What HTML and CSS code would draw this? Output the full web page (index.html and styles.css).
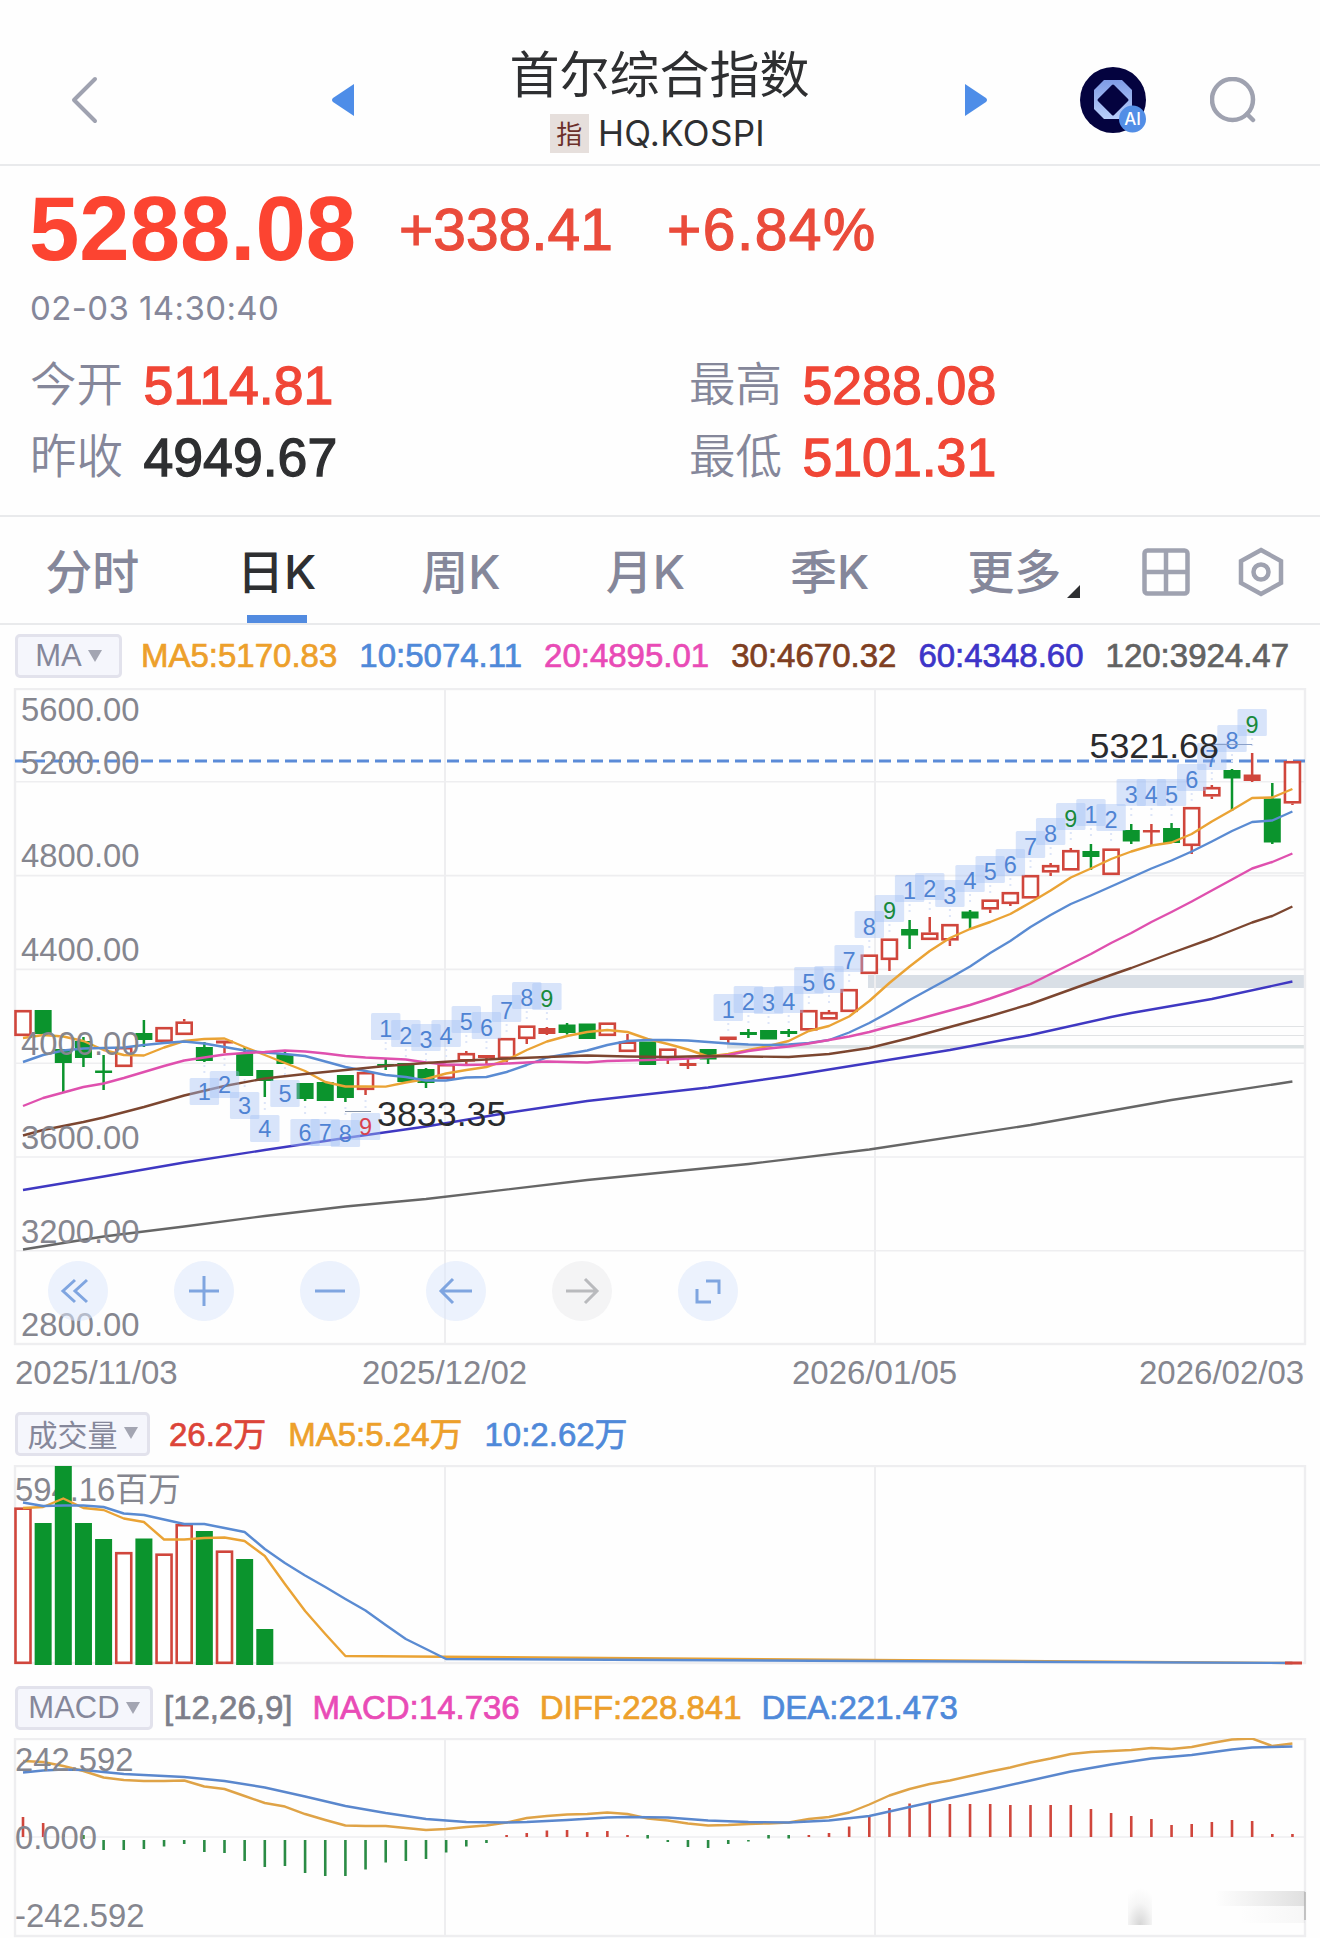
FILE: index.html
```html
<!DOCTYPE html>
<html lang="zh-CN">
<head>
    <meta charset="UTF-8">
    <meta name="viewport" content="width=device-width, initial-scale=1.0">
    <title>首尔综合指数</title>
    <link rel="stylesheet" href="styles.css">
</head>
<body>
    <div class="page">
        <header class="header">
            <svg class="back" width="30" height="48" viewBox="0 0 30 48"><path d="M25 3L4 24L25 45"/></svg>
            <svg class="prev" width="22" height="32" viewBox="0 0 22 32"><path d="M22 0V32L1 18Q-1 16 1 14Z"/></svg>
            <div class="title">
                <h1>首尔综合指数</h1>
                <div class="code"><span class="tag">指</span>HQ.KOSPI</div>
            </div>
            <svg class="next" width="22" height="32" viewBox="0 0 22 32"><path d="M0 0V32L21 18Q23 16 21 14Z"/></svg>
            <svg class="ai" width="68" height="68" viewBox="0 0 68 68">
                <defs>
                    <linearGradient id="aiRing" x1="0" y1="0" x2="0" y2="1">
                        <stop offset="0" stop-color="#7f9be6"/>
                        <stop offset="1" stop-color="#b9cffa"/>
                    </linearGradient>
                </defs>
                <circle cx="33" cy="34" r="33" fill="#04033f"/>
                <path d="M24 14H42L52 24V43L42 53H24L14 43V24Z" fill="url(#aiRing)"/>
                <path d="M33 20L47 34L33 48L19 34Z" fill="#04033f" stroke="#04033f" stroke-width="3" stroke-linejoin="round"/>
                <circle cx="52.500" cy="53" r="13.500" fill="#528ee6"/>
                <text x="52.500" y="59" class="ai-text">AI</text>
            </svg>
            <svg class="search" width="46" height="46" viewBox="0 0 46 46"><circle cx="22.500" cy="22.500" r="20.500"/><path d="M37 37L43 43"/></svg>
        </header>

        <section class="quote">
            <div class="price-row">
                <span class="price">5288.08</span>
                <span class="change">+338.41</span>
                <span class="change percent">+6.84%</span>
            </div>
            <div class="time">02-03 14:30:40</div>
            <div class="stats">
                <div class="stat"><label>今开</label><b class="up">5114.81</b></div>
                <div class="stat"><label>最高</label><b class="up">5288.08</b></div>
                <div class="stat"><label>昨收</label><b>4949.67</b></div>
                <div class="stat"><label>最低</label><b class="up">5101.31</b></div>
            </div>
        </section>

        <nav class="tabs">
            <div class="tab">分时</div>
            <div class="tab active">日K</div>
            <div class="tab">周K</div>
            <div class="tab">月K</div>
            <div class="tab">季K</div>
            <div class="tab more">更多</div>
            <svg class="grid-icon" width="48" height="48" viewBox="0 0 48 48"><rect x="2.500" y="2.500" width="43" height="43" rx="3"/><path d="M24 2V46M2 24H46"/></svg>
            <svg class="gear-icon" width="46" height="50" viewBox="0 0 46 50"><path d="M23 3L43 14V36L23 47L3 36V14Z"/><circle cx="23" cy="25" r="7.500"/></svg>
        </nav>

        <div class="legend legend-ma">
            <span class="select">MA<i></i></span>
            <span class="orange">MA5:5170.83</span>
            <span class="blue">10:5074.11</span>
            <span class="pink">20:4895.01</span>
            <span class="brown">30:4670.32</span>
            <span class="navy">60:4348.60</span>
            <span class="dark">120:3924.47</span>
        </div>
        <div class="chart">
            <svg id="kline" width="1320" height="658" viewBox="0 688 1320 658"></svg>
            <div class="tools">
                <span class="tool"><svg viewBox="0 0 60 60"><path d="M27 19L15 30L27 41M39 19L27 30L39 41"/></svg></span>
                <span class="tool"><svg viewBox="0 0 60 60"><path d="M15 30H45M30 15V45"/></svg></span>
                <span class="tool"><svg viewBox="0 0 60 60"><path d="M15 30H45"/></svg></span>
                <span class="tool"><svg viewBox="0 0 60 60"><path d="M46 30H15M27 18L15 30L27 42"/></svg></span>
                <span class="tool off"><svg viewBox="0 0 60 60"><path d="M14 30H45M33 18L45 30L33 42"/></svg></span>
                <span class="tool"><svg viewBox="0 0 60 60"><path d="M28 20H41V33M19 28V41H33"/></svg></span>
            </div>
        </div>
        <div class="dates">
            <span>2025/11/03</span>
            <span>2025/12/02</span>
            <span>2026/01/05</span>
            <span>2026/02/03</span>
        </div>

        <div class="legend legend-vol">
            <span class="select">成交量<i></i></span>
            <span class="red">26.2万</span>
            <span class="orange">MA5:5.24万</span>
            <span class="blue">10:2.62万</span>
        </div>
        <svg id="volume" class="panel" width="1320" height="200" viewBox="0 1465 1320 200"></svg>

        <div class="legend legend-macd">
            <span class="select">MACD<i></i></span>
            <span class="gray">[12,26,9]</span>
            <span class="pink">MACD:14.736</span>
            <span class="orange">DIFF:228.841</span>
            <span class="blue">DEA:221.473</span>
        </div>
        <svg id="macd" class="panel" width="1320" height="200" viewBox="0 1738 1320 200"></svg>
    </div>
    <script src="chart.js"></script>
</body>
</html>
```

FILE: styles.css
```css
* {
    box-sizing: border-box;
}
body {
    margin: 0;
    background: #fefefe;
    color: #2e2f31;
    font-family: "Liberation Sans", "Noto Sans CJK SC", sans-serif;
}
.page {
    width: 1320px;
    height: 1938px;
    overflow: hidden;
}
svg {
    display: block;
    flex: none;
}

/* header */
.header {
    display: flex;
    align-items: center;
    height: 166px;
    padding: 36px 0 0 70px;
    border-bottom: 2px solid #e9eaec;
}
.back, .search {
    fill: none;
    stroke: #9fa2b0;
    stroke-width: 4;
    stroke-linecap: round;
    stroke-linejoin: round;
}
.search {
    stroke-width: 4.5;
    margin-left: 62px;
}
.prev, .next {
    fill: #4e8de8;
}
.prev {
    margin-left: 232px;
}
.title {
    width: 611px;
    padding-top: 2px;
    text-align: center;
}
.title h1 {
    margin: 0;
    font-size: 50px;
    font-weight: 400;
    line-height: 64px;
}
.code {
    display: flex;
    justify-content: center;
    align-items: center;
    height: 50px;
    padding-right: 4px;
    font: 35px/50px Inter, sans-serif;
    letter-spacing: 0.3px;
}
.tag {
    width: 39px;
    height: 39px;
    margin-right: 9px;
    background: #e6dfdc;
    color: #6b2f2a;
    font: 26px/37px "Noto Sans CJK SC", sans-serif;
}
.ai {
    margin-left: 93px;
}
.ai-text {
    fill: #fff;
    font: 500 17px Inter, sans-serif;
    text-anchor: middle;
}

/* quote */
.quote {
    height: 351px;
    padding: 13px 30px 0;
    border-bottom: 2px solid #e9eaec;
}
.price-row {
    display: flex;
    align-items: center;
    height: 100px;
    color: #fc4431;
}
.price {
    width: 370px;
    font-size: 90.5px;
    font-weight: 700;
    margin-left: -1px;
}
.change {
    width: 268px;
    font-size: 58.7px;
    color: #ea4b3b;
    -webkit-text-stroke: 1.2px #ea4b3b;
}
.percent {
    letter-spacing: 1.5px;
}
.time {
    font: 33px/58px Inter, sans-serif;
    letter-spacing: 0.4px;
    color: #85879a;
}
.stats {
    display: grid;
    grid-template-columns: 659px 1fr;
    grid-auto-rows: 72px;
    margin-top: 12px;
}
.stat {
    display: flex;
    align-items: center;
    font-size: 46.5px;
    line-height: 72px;
}
.stat label {
    width: 113.5px;
    height: 72px;
    margin-top: -8px;
    color: #85879a;
    font-family: "Noto Sans CJK SC", sans-serif;
    font-weight: 350;
}
.stat b {
    font-size: 53.6px;
    font-weight: 400;
    -webkit-text-stroke: 1.3px;
}
.up {
    color: #f04636;
}

/* tabs */
.tabs {
    display: flex;
    align-items: center;
    height: 108px;
    border-bottom: 2px solid #e9eaec;
}
.tab {
    position: relative;
    width: 184.4px;
    height: 106px;
    text-align: center;
    color: #85879a;
    font: 500 47px/110px Inter, "Noto Sans CJK SC", sans-serif;
}
.tab.active {
    color: #2e2f31;
}
.tab.active::after {
    content: "";
    position: absolute;
    left: 63px;
    bottom: 0;
    width: 60px;
    height: 8px;
    background: #528be0;
}
.tab.more::after {
    content: "";
    position: absolute;
    right: 26px;
    bottom: 25px;
    border-left: 13px solid transparent;
    border-bottom: 13px solid #2e2f31;
}
.grid-icon, .gear-icon {
    margin-top: 3px;
    margin-left: 36px;
    fill: none;
    stroke: #9fa2b0;
    stroke-width: 4.5;
}
.gear-icon {
    margin-left: 48px;
}

/* legends */
.legend {
    display: flex;
    align-items: center;
    gap: 22px;
    padding-left: 15px;
    font-size: 33px;
    white-space: nowrap;
    -webkit-text-stroke: 0.7px;
}
.legend-ma {
    height: 63px;
    padding-bottom: 2px;
}
.legend-vol {
    height: 61px;
    padding-bottom: 1px;
}
.legend-vol > span:not(.select) {
    margin-top: -4px;
}
.legend-macd {
    height: 73px;
    padding-top: 12px;
    gap: 20px;
}
.select {
    display: flex;
    align-items: center;
    justify-content: center;
    gap: 6px;
    width: 107px;
    height: 44px;
    margin-right: -3px;
    border: 3px solid #e2e2ec;
    border-radius: 5px;
    background: #f5f6fc;
    color: #85879a;
    font-size: 31px;
    -webkit-text-stroke: 0;
}
.legend-vol .select {
    width: 135px;
    margin-right: -3px;
    padding-bottom: 3px;
    font-size: 30px;
}
.legend-macd .select {
    width: 138px;
    margin-right: -9px;
}
.select i {
    border: 7px solid transparent;
    border-top: 12px solid #a3a5b2;
    border-bottom: 0;
}
.orange { color: #eda02b; }
.blue { color: #4f89d9; }
.pink { color: #e94bb6; }
.brown { color: #7f3f22; }
.navy { color: #3d35c8; }
.dark { color: #626262; }
.gray { color: #7d7e89; }
.red { color: #dc4438; }

/* charts */
.chart {
    position: relative;
}
.tools {
    position: absolute;
    left: 47.5px;
    top: 573px;
    display: flex;
    gap: 66px;
}
.tool {
    width: 60px;
    height: 60px;
    border-radius: 50%;
    background: rgba(221, 232, 252, 0.55);
}
.tool path {
    fill: none;
    stroke: #7fa5e0;
    stroke-width: 3;
}
.tool.off {
    background: #f4f4f5;
}
.tool.off path {
    stroke: #b9babd;
}
.dates {
    display: flex;
    height: 58px;
    padding: 0 15px;
    color: #85868f;
    font-size: 33px;
    line-height: 54px;
}
.dates span {
    width: 347px;
}
.dates span:nth-child(2) {
    width: 430px;
}
.dates span:last-child {
    width: auto;
}
.axis {
    fill: #85868f;
    font-size: 32.8px;
}
.peak {
    fill: #2a2b2d;
    font-size: 35.8px;
}
.mark {
    font-size: 23.5px;
    text-anchor: middle;
}
.line {
    fill: none;
    stroke-width: 2.4;
    stroke-linejoin: round;
}
```

FILE: chart.js
```js
const GREEN = "#0b942d";
const RED = "#d0463c";
const GRID = "#eeeef0";
const STEP = 20.15;
const X0 = 23;
const xAt = i => X0 + i * STEP;

const rect = (x, y, w, h, attrs) => `<rect x="${x}" y="${y}" width="${w}" height="${h}" ${attrs}/>`;
const seg = (x1, y1, x2, y2, color, w) => `<path d="M${x1} ${y1}L${x2} ${y2}" stroke="${color}" stroke-width="${w}"/>`;
const text = (x, y, cls, str, extra = "") => `<text x="${x}" y="${y}" class="${cls}" ${extra}>${str}</text>`;

// points are [index, y] pairs
function line(points, color) {
    const d = points.map(p => xAt(p[0]).toFixed(1) + "," + p[1]).join(" ");
    return `<polyline class="line" points="${d}" stroke="${color}"/>`;
}
const seq = (...ys) => ys.map((y, i) => [i, y]);

function frame(top, bottom) {
    return rect(15, top, 1290, bottom - top, `fill="none" stroke="${GRID}" stroke-width="2.4"`)
        + seg(445, top, 445, bottom, GRID, 2) + seg(875, top, 875, bottom, GRID, 2);
}

// [type, body top, body bottom, wick top, wick bottom], r hollow, s solid red, g green
const candles = [
    ["r", 1010, 1036], ["g", 1010, 1034], ["g", 1049, 1063, 1049, 1093], ["g", 1041, 1058, 1037, 1067],
    ["g", 1070.5, 1073, 1055, 1090], ["r", 1047, 1067], ["g", 1033, 1040, 1020, 1047], ["r", 1027, 1042],
    ["r", 1021.5, 1035, 1019, 1022], ["g", 1047, 1061, 1042, 1062], ["s", 1040.5, 1043.5, 1041, 1053], ["g", 1053, 1076, 1047, 1076],
    ["g", 1070, 1081, 1070, 1097], ["g", 1054, 1064, 1050, 1064], ["g", 1083, 1099, 1083, 1101], ["g", 1082, 1101],
    ["g", 1075, 1098, 1075, 1102], ["r", 1072, 1090, 1090, 1095], ["g", 1064, 1066, 1059, 1070], ["g", 1063, 1082],
    ["g", 1069, 1083, 1068, 1088], ["r", 1064, 1079], ["r", 1053, 1061.5, 1051, 1064], ["s", 1055, 1058, 1055, 1065],
    ["r", 1038, 1059, 1059, 1062], ["r", 1025.5, 1039, 1039, 1044], ["s", 1028, 1034, 1027, 1035], ["g", 1024.5, 1033, 1023, 1034.5],
    ["g", 1023.5, 1039], ["r", 1022.5, 1036], ["r", 1041.5, 1052, 1034, 1042], ["g", 1041.5, 1065],
    ["r", 1048.5, 1058.5, 1059, 1064], ["s", 1063, 1066, 1059, 1069], ["g", 1049, 1059.5, 1049, 1064], ["s", 1036.5, 1040, 1037, 1043],
    ["g", 1032, 1035, 1029, 1038], ["g", 1030, 1039.5], ["g", 1031, 1034, 1029, 1037], ["r", 1010, 1030.5],
    ["r", 1012, 1019.5, 1010, 1012], ["r", 989, 1012], ["r", 954.5, 974], ["r", 938.5, 960, 960, 971],
    ["g", 929, 935.5, 920, 949], ["r", 932.5, 940, 917, 932], ["r", 924, 940.5, 941, 946], ["g", 911.5, 918.5, 910, 929],
    ["r", 899.5, 909.5, 909, 913], ["r", 892, 904, 904, 906], ["r", 875, 898.500], ["r", 865, 872.5, 863, 876],
    ["r", 850, 870.5, 848, 850], ["g", 851, 857, 844, 870], ["r", 848.5, 875], ["g", 830, 841.5, 824, 844],
    ["s", 830, 832.5, 824, 845], ["g", 828, 843, 823, 843], ["r", 807, 846, 846, 854], ["r", 787, 796.5, 785, 799],
    ["g", 770, 778.5, 769, 811], ["s", 774.5, 781, 753, 782], ["g", 798.5, 842.5, 783, 844], ["r", 761, 803.5, 803, 805]
];

// [candle index, digit, box top, side]
const marks = [
    [9, 1, 1078, "b"], [10, 2, 1071, "b"], [11, 3, 1092, "b"], [12, 4, 1115, "b"], [13, 5, 1080, "b"],
    [14, 6, 1119, "b"], [15, 7, 1119, "b"], [16, 8, 1120, "b"], [17, 9, 1113, "b"],
    [18, 1, 1013], [19, 2, 1020], [20, 3, 1024], [21, 4, 1020], [22, 5, 1006], [23, 6, 1012], [24, 7, 995], [25, 8, 982], [26, 9, 983],
    [35, 1, 994], [36, 2, 986], [37, 3, 987], [38, 4, 986], [39, 5, 967], [40, 6, 966], [41, 7, 945], [42, 8, 911], [43, 9, 895],
    [44, 1, 875], [45, 2, 873], [46, 3, 880], [47, 4, 865], [48, 5, 856], [49, 6, 849], [50, 7, 831], [51, 8, 818], [52, 9, 803],
    [53, 1, 799], [54, 2, 804], [55, 3, 779], [56, 4, 779], [57, 5, 779], [58, 6, 764], [59, 7, 743], [60, 8, 725], [61, 9, 709]
];

const ma5 = seq(1038, 1035, 1036.5, 1041, 1050, 1055, 1055.5, 1047.5, 1041, 1039, 1038.5, 1047, 1055, 1063, 1071, 1082, 1086.5, 1086.5,
    1086.6, 1082.5, 1079, 1073.5, 1070, 1067, 1060, 1050, 1041.5, 1036, 1032, 1030, 1032, 1039, 1044, 1049.5, 1056.5, 1054, 1050, 1046,
    1041, 1031, 1026, 1016.5, 1001, 983, 966.5, 951, 938, 929, 922, 914, 902.5, 890.5, 877.5, 868.5, 859, 851.5, 845.5, 842.5, 834,
    821.5, 810, 798, 797.5, 789);
const ma10 = seq(1062, 1055, 1050.5, 1048.5, 1048, 1047.5, 1045, 1043, 1041.5, 1043.5, 1047, 1050.5, 1052.5, 1054, 1056, 1061.5, 1067,
    1071, 1075, 1077, 1080.5, 1080.5, 1077.5, 1077, 1072, 1065, 1057.5, 1054, 1050.5, 1045, 1041, 1040, 1040, 1040.5, 1042, 1043.5,
    1044.5, 1045, 1044.5, 1043, 1040, 1032.5, 1023, 1012, 1000, 989, 978, 966.5, 953, 941, 927, 915, 904, 895.5, 886.5, 877.5, 868.5,
    860.5, 851.5, 841.5, 831, 822, 820.5, 811.5);
const ma20 = seq(1106, 1098, 1092.5, 1087, 1083.5, 1078, 1072, 1066, 1060.5, 1057.5, 1054.5, 1053, 1052, 1050.5, 1051.5, 1053.5, 1056,
    1057.5, 1058.5, 1059.5, 1062.5, 1064.5, 1065, 1064.5, 1063.5, 1062.5, 1061.5, 1062, 1062.5, 1061, 1060.5, 1060, 1059.5, 1058.5,
    1057, 1055, 1051, 1048.5, 1046.5, 1043.5, 1040, 1036.5, 1032, 1026.5, 1021.5, 1016, 1010.5, 1005, 998.5, 991.5, 984, 974, 964, 954,
    943, 933, 922, 912, 901.5, 890.5, 879.5, 868.5, 862, 853.5);
const ma30 = [[0, 1135.5], [1, 1130], [3, 1122], [4, 1117.5], [6, 1107], [8, 1095.5], [10, 1086], [12, 1078.5], [14, 1074], [16, 1070],
    [18, 1066], [20, 1063], [22, 1060.5], [24, 1058.5], [26, 1057], [28, 1055.5], [30, 1056.5], [32, 1057], [34, 1056], [36, 1056.5],
    [38, 1057], [40, 1054], [42, 1048], [44, 1038], [46, 1027], [48, 1016], [50, 1004], [52, 989.5], [54, 975], [55, 968], [57, 953],
    [59, 938.5], [61, 922.5], [62, 916], [63, 906.5]];
const ma60 = [[0, 1190], [4, 1176.5], [8, 1162.5], [12, 1150], [16, 1138], [20, 1126.5], [24, 1113], [28, 1101], [32, 1092],
    [34, 1087.5], [38, 1076], [42, 1063], [46, 1050], [50, 1035], [54, 1017], [55, 1013], [59, 999], [63, 981.5]];
const ma120 = [[0, 1249.5], [4, 1236.5], [8, 1226.5], [12, 1216], [16, 1206.5], [20, 1199], [28, 1180], [36, 1164], [42, 1149.5],
    [50, 1125], [57, 1100], [63, 1081.5]];

function drawKline() {
    let s = "";
    // gap bands
    s += rect(868, 975, 437, 13, 'fill="#d9dfe6"');
    s += rect(727, 1045, 578, 3.5, 'fill="#dbe1e3"');
    s += seg(875, 1026.5, 1305, 1026.5, "#e1e3e5", 1.2) + seg(855, 1035.5, 1305, 1035.5, "#e1e3e5", 1.2);
    s += seg(1110, 873, 1305, 873, "#e1e3e5", 1.2);
    s += frame(689, 1344);
    for (let i = 1; i < 7; i++) {
        s += seg(15, 688 + i * 93.8, 1305, 688 + i * 93.8, GRID, 1.6);
    }
    s += `<path d="M15 761H1305" stroke="#5b8bd8" stroke-width="3" stroke-dasharray="12 6"/>`;

    candles.forEach((c, i) => {
        const [type, top, bottom, high, low] = c;
        const x = xAt(i);
        const color = type === "g" ? GREEN : RED;
        if (high !== undefined) {
            // hollow bodies keep the wick outside
            if (type === "r") {
                if (high < top) s += seg(x, high, x, top, color, 2.5);
                if (low > bottom) s += seg(x, bottom, x, low, color, 2.5);
            } else {
                s += seg(x, high, x, low, color, 2.5);
            }
        }
        if (type === "r") {
            s += rect(x - 7.5, top + 1.2, 15, Math.max(bottom - top - 2.4, 2), `fill="#fff" stroke="${color}" stroke-width="2.6"`);
        } else {
            s += rect(x - 8.5, top, 17, bottom - top, `fill="${color}"`);
        }
    });

    s += line(ma5, "#eaa335") + line(ma10, "#5a8bd2") + line(ma20, "#df50ae");
    s += line(ma30, "#7c4630") + line(ma60, "#3f38c2") + line(ma120, "#666");

    [[721, "5600"], [773.5, "5200"], [867, "4800"], [961, "4400"], [1055, "4000"], [1149, "3600"], [1243, "3200"], [1336, "2800"]]
        .forEach(a => s += text(21, a[0], "axis", a[1] + ".00"));

    marks.forEach(([i, n, y, side]) => {
        const x = xAt(i);
        const color = n < 9 ? "#4f83d3" : side ? "#d8414d" : "#198a3c";
        const dots = side ? [y - 13, y - 2] : [y + 29, y + 41];
        s += rect(x - 14.7, y, 29.4, 27, 'rx="1.5" fill="#9fbdf5" fill-opacity="0.4"');
        s += `<path d="M${x} ${dots[0]}V${dots[1]}" stroke="#dde5f8" stroke-width="2" stroke-dasharray="2 4"/>`;
        s += text(x, y + (side ? 22 : 24), "mark", n, `fill="${color}"`);
    });

    s += seg(345, 1111.5, 371, 1111.5, "#8794a8", 1) + text(377, 1126, "peak", "3833.35");
    s += seg(1207, 744.5, 1252, 744.5, "#8aa0c8", 1) + text(1089.5, 758, "peak", "5321.68");
    document.getElementById("kline").innerHTML = s;
}

function drawVolume() {
    const bars = [["r", 1507.5], ["g", 1523], ["g", 1466], ["g", 1523], ["g", 1539], ["r", 1552], ["g", 1538.5], ["r", 1553.5],
        ["r", 1524], ["g", 1531], ["r", 1550.5], ["g", 1559], ["g", 1629]];
    const v5 = seq(1508, 1507, 1498.5, 1508, 1510, 1518.5, 1522, 1539.5, 1539.5, 1538, 1537.5, 1541, 1556, 1584, 1611, 1634, 1656);
    const v10 = seq(1502.5, 1506, 1505.5, 1505.5, 1507, 1513.5, 1515, 1519.5, 1524, 1524, 1528, 1532, 1549, 1563, 1575.5, 1587, 1599,
        1610.5, 1625, 1639, 1649, 1659);
    v5.push([63, 1663]);
    v10.push([63, 1663]);

    let s = frame(1466, 1663) + text(15, 1501, "axis", "594.16百万");
    bars.forEach(([type, y], i) => {
        if (type === "r") {
            s += rect(xAt(i) - 7.5, y + 1.2, 15, 1663 - y - 1.4, `fill="#fff" stroke="${RED}" stroke-width="2.6"`);
        } else {
            s += rect(xAt(i) - 8.5, y, 17, 1665 - y, `fill="${GREEN}"`);
        }
    });
    s += line(v5, "#eaa335") + line(v10, "#5a8bd2");
    s += rect(1285, 1661.5, 17, 3, `fill="${RED}"`);
    document.getElementById("volume").innerHTML = s;
}

function drawMacd() {
    const diff = seq(1761, 1762, 1766, 1771, 1777.5, 1780, 1781, 1781, 1780.5, 1786.5, 1789, 1796, 1803, 1806.5, 1814, 1820, 1825.5, 1826,
        1826, 1828, 1830, 1829, 1827, 1825.5, 1822.5, 1818, 1816, 1814.5, 1814, 1812.5, 1814, 1818.5, 1820.5, 1823.5, 1825.5, 1825, 1824,
        1823.5, 1822.5, 1819, 1817, 1812.5, 1804.5, 1795.5, 1789, 1784, 1780.5, 1776, 1771.5, 1767.5, 1762.5, 1758.5, 1754, 1752, 1751,
        1750, 1748, 1749, 1747, 1743, 1739.5, 1738.5, 1746, 1743.5);
    const dea = [[0, 1772.5], [1, 1770.5], [2, 1769.5], [3, 1770], [4, 1772], [5, 1774], [6, 1775], [8, 1777], [10, 1781], [12, 1787.5],
        [14, 1796.5], [16, 1806], [18, 1813], [20, 1819], [22, 1822], [24, 1822.5], [25, 1822], [27, 1820], [29, 1817.5], [30, 1817],
        [32, 1817.5], [34, 1820.5], [36, 1822], [38, 1822.5], [40, 1820.5], [42, 1816], [44, 1807], [46, 1798], [48, 1789.5],
        [50, 1780.5], [52, 1771.5], [54, 1764.5], [56, 1758.5], [58, 1755], [60, 1749.5], [61, 1747.5], [62, 1747], [63, 1746.5]];
    // end of each histogram bar, below 1837 is negative
    const hist = [1817, 1823, 1834, 1839, 1850, 1850, 1849, 1846.5, 1844, 1852, 1853, 1861, 1867, 1866, 1873, 1876, 1876, 1869.5, 1862.5,
        1861, 1859, 1852.5, 1846.5, 1843, 1835, 1833, 1830.5, 1830, 1832, 1831, 1835, 1838.5, 1842, 1847, 1848, 1844, 1841.5, 1838.5,
        1838.5, 1835, 1833, 1826.5, 1817, 1808, 1803.5, 1803, 1804, 1804, 1804, 1805, 1805, 1805, 1805, 1809, 1813, 1816, 1819, 1825,
        1824, 1822, 1820, 1821, 1834, 1834];

    let s = `<defs>
        <linearGradient id="fadeX"><stop offset="0" stop-color="#999" stop-opacity="0"/><stop offset="1" stop-color="#999" stop-opacity="0.3"/></linearGradient>
        <radialGradient id="spot" cx="0.5" cy="1" r="0.9"><stop offset="0" stop-color="#999" stop-opacity="0.4"/><stop offset="0.6" stop-color="#999" stop-opacity="0.08"/><stop offset="1" stop-color="#999" stop-opacity="0"/></radialGradient>
    </defs>`;
    s += frame(1739, 1936) + seg(15, 1837, 1305, 1837, GRID, 1.6);
    s += rect(1128, 1884, 24, 41, 'fill="url(#spot)"') + rect(1215, 1891, 90, 15, 'fill="url(#fadeX)"');
    s += rect(1240, 1906, 65, 17, 'fill="url(#fadeX)" opacity="0.25"');
    s += seg(1305, 1892, 1305, 1920, "#b5b5b5", 1.5);
    hist.forEach((y, i) => {
        const down = y > 1837;
        const start = !down ? 1837 : y < 1840 ? 1835 : 1840;
        s += seg(xAt(i), start, xAt(i), y, down ? "#2a8b45" : RED, 2.6);
    });
    s += line(diff, "#dfa347") + line(dea, "#5a87cd");
    s += text(15, 1771, "axis", "242.592") + text(15, 1849, "axis", "0.000") + text(15, 1927, "axis", "-242.592");
    document.getElementById("macd").innerHTML = s;
}

drawKline();
drawVolume();
drawMacd();
```
